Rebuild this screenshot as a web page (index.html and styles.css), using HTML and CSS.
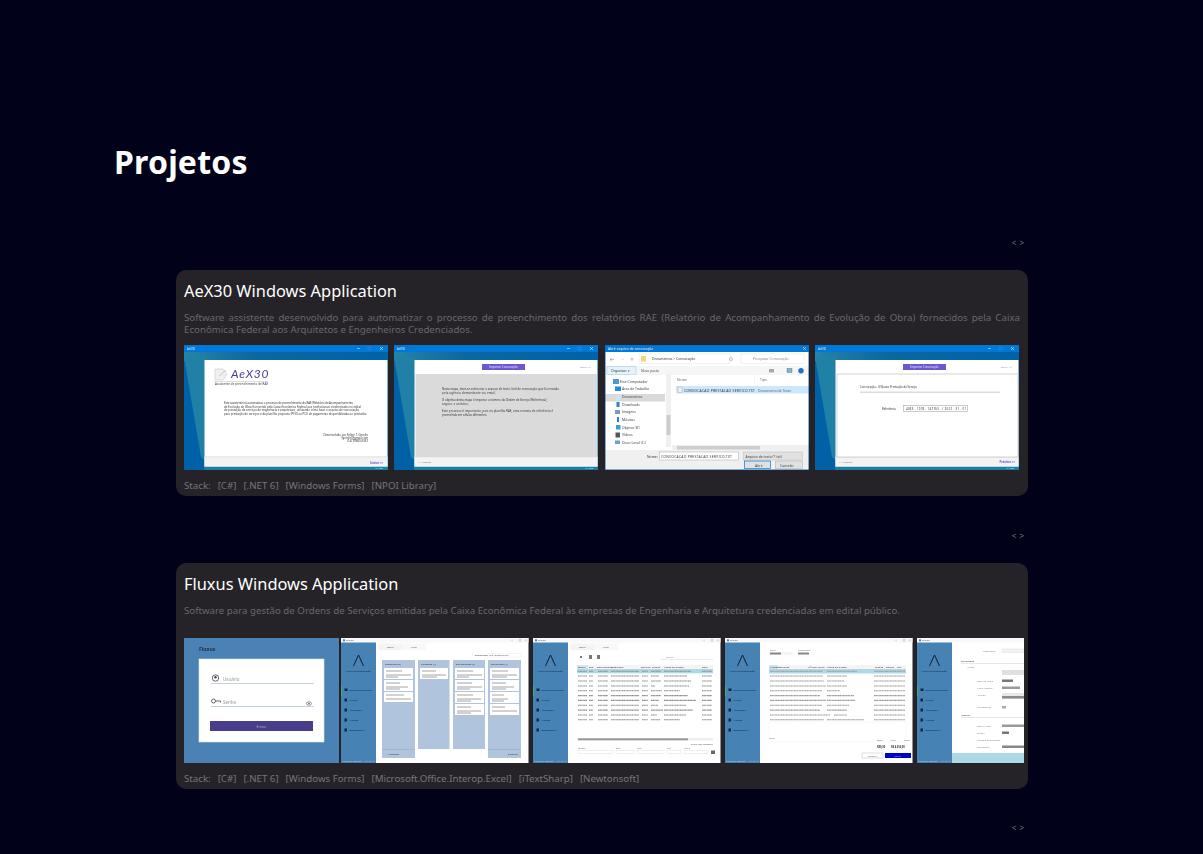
FILE: index.html
```html
<!DOCTYPE html>
<html lang="pt-BR">
<head>
  <meta charset="UTF-8" />
  <meta name="viewport" content="width=device-width, initial-scale=1.0"/>
  <title>Projetos</title>
  <link rel="stylesheet" href="styles.css">
</head>
<body>
  <main>
    <h1>Projetos</h1>

    <section class="project">
      <div class="carousel-nav"><span>&lt;</span><span>&gt;</span></div>
      <article class="card">
        <h2>AeX30 Windows Application</h2>
        <p class="desc">Software assistente desenvolvido para automatizar o processo de preenchimento dos relatórios RAE (Relatório de Acompanhamento de Evolução de Obra) fornecidos pela Caixa Econômica Federal aos Arquitetos e Engenheiros Credenciados.</p>
        <div class="gallery gallery-fit">
          <!-- tela inicial -->
          <svg class="shot" viewBox="0 0 204 125" width="204" height="125">
            <defs>
              <linearGradient id="wall" x1="0" y1="0" x2="1" y2="0">
                <stop offset="0" stop-color="#2584a8"/><stop offset="0.35" stop-color="#0b679f"/><stop offset="1" stop-color="#0062a8"/>
              </linearGradient>
              <g id="desktop">
                <rect width="204" height="125" fill="#0061a6"/>
                <rect y="7" width="204" height="9" fill="url(#wall)"/>
                <polygon points="0,12 22,12 22,116 17,112" fill="#2180a6"/>
                <rect y="121" x="20" width="184" height="4" fill="#1c7ea3"/>
                <rect width="204" height="7" fill="#0078d7"/>
                <text x="3" y="4.600" class="t3" fill="#d8ecfa">AeX30</text>
                <rect x="173" y="3" width="3" height="0.600" fill="#cfe6f8"/>
                <rect x="184" y="2" width="3" height="3" fill="none" stroke="#3a94de" stroke-width="0.500"/>
                <path d="M196 2l3 3m0-3l-3 3" stroke="#e8f4fc" stroke-width="0.600"/>
                <rect x="20.500" y="15" width="183" height="106.500" fill="#fff"/>
                <rect x="20.500" y="112" width="183" height="9.500" fill="#f3f3f3"/>
                <rect x="20.500" y="111.500" width="183" height="0.700" fill="#d6d6d6"/>
                <text x="199" y="124.400" text-anchor="end" class="t2" fill="#dff">v 1.0.0</text>
              </g>
              <g id="stepper">
                <rect x="88" y="19" width="43" height="6" fill="#6a5acd"/>
                <text x="109.500" y="23" text-anchor="middle" class="t3" fill="#e6e2fa">Importar Convocação</text>
                <text x="197" y="23" text-anchor="end" class="t2" fill="#999">Etapa 1/4</text>
              </g>
            </defs>
            <use href="#desktop"/>
            <path d="M31 24h8l4 5-4 6h-8z" fill="#f0f0f0" stroke="#cfcfcf" stroke-width="0.700"/>
            <path d="M35 31l7-6" stroke="#b5b5b5" stroke-width="0.700"/>
            <text x="47" y="33" class="logo-text" fill="#473d8f">AeX30</text>
            <rect x="30" y="36" width="54" height="0.500" fill="#bbb"/>
            <text x="31" y="40" class="t3 dark" textLength="53">Assistente de preenchimento de RAE</text>
            <g class="t3 dark">
              <text x="40" y="59.300" textLength="129">Este assistente irá automatizar o processo de preenchimento do RAE (Relatório de Acompanhamento</text>
              <text x="40" y="62.800" textLength="137">de Evolução de Obra) fornecido pela Caixa Econômica Federal aos profissionais credenciados no edital</text>
              <text x="40" y="66.300" textLength="135">de prestação de serviços de engenharia e arquitetura, utilizando como base o arquivo de convocação</text>
              <text x="40" y="70" textLength="143">para prestação de serviços e da planilha proposta (PFUI ou PCI) de pagamento disponibilizada ao prestador.</text>
              <text x="184" y="90.500" text-anchor="end">Desenvolvido por Felipe T. Gerolin</text>
              <text x="184" y="93.800" text-anchor="end">fgerolin@gmail.com</text>
              <text x="184" y="97" text-anchor="end">(14) 99809-9332</text>
            </g>
            <text x="199" y="119" text-anchor="end" class="t3 purple">Iniciar &gt;&gt;</text>
          </svg>

          <!-- importar convocacao -->
          <svg class="shot" viewBox="0 0 204 125" width="204" height="125">
            <use href="#desktop"/>
            <use href="#stepper"/>
            <rect x="21.500" y="29" width="181.500" height="83" fill="#dadada"/>
            <g class="t3 dark">
              <text x="48" y="45" textLength="117">Nesta etapa, deve-se selecionar o arquivo de texto (.txt) de convocação que foi enviado</text>
              <text x="48" y="48.500" textLength="54">pela agência demandante via email.</text>
              <text x="48" y="56" textLength="105">O objetivo desta etapa é importar o número da Ordem de Serviço (Referência),</text>
              <text x="48" y="59.500" textLength="27">seguro e unitário.</text>
              <text x="48" y="67" textLength="111">Este processo é importante, pois na planilha RAE, uma nomeia de referência é</text>
              <text x="48" y="70.500" textLength="45">preenchida em células diferentes.</text>
            </g>
            <text x="24" y="118" class="t2" fill="#777">&lt;&lt; Anterior</text>
          </svg>

          <!-- janela abrir arquivo -->
          <svg class="shot" viewBox="0 0 204 125" width="204" height="125">
            <rect width="204" height="125" fill="#fff"/>
            <rect width="204" height="7" fill="#0078d7"/>
            <text x="3" y="4.800" class="t4" fill="#dcefff">Abrir arquivo de convocação</text>
            <path d="M198 2l3 3m0-3l-3 3" stroke="#e8f4fc" stroke-width="0.500"/>
            <g stroke="#888" stroke-width="0.500" fill="none">
              <path d="M5 14.500h4m-2-1.500l-2 1.500 2 1.500"/>
              <path d="M16 14.500h3" stroke="#ccc"/>
              <path d="M27 16v-3m-1.500 1.500l1.500-1.500 1.500 1.500"/>
              <rect x="34" y="9" width="91" height="9.500" stroke="#e4e4e4"/>
              <rect x="136" y="9" width="63" height="9.500" stroke="#e4e4e4"/>
              <circle cx="126" cy="14" r="1.500"/>
            </g>
            <rect x="36" y="11" width="5" height="5.500" fill="#f7d675"/>
            <text x="47" y="15.400" class="t4 dark">Documentos  &gt;  Convocação</text>
            <text x="148" y="15.400" class="t4" fill="#8c8c8c">Pesquisar Convocação</text>
            <rect y="21" width="204" height="9" fill="#f5f6f7"/>
            <rect x="2" y="21.500" width="29" height="8" fill="#e5f1fb" stroke="#a6cdea" stroke-width="0.600"/>
            <text x="6" y="27" class="t4" fill="#444">Organizar ▾</text>
            <text x="36" y="27" class="t4" fill="#555">Nova pasta</text>
            <rect x="164" y="24" width="5" height="3.500" fill="#a9a9a9"/>
            <rect x="182" y="23.500" width="5" height="4" fill="#7fb6dd" stroke="#666" stroke-width="0.400"/>
            <circle cx="196" cy="25.700" r="2.700" fill="#1b74c5"/>
            <rect y="49" x="0" width="60" height="7.500" fill="#d9d9d9"/>
            <g class="t4" fill="#444">
              <text x="15" y="37.800">Este Computador</text>
              <text x="17" y="45.300">Área de Trabalho</text>
              <text x="17" y="53">Documentos</text>
              <text x="17" y="60.700">Downloads</text>
              <text x="17" y="68.300">Imagens</text>
              <text x="17" y="76">Músicas</text>
              <text x="17" y="83.700">Objetos 3D</text>
              <text x="17" y="91.300">Vídeos</text>
              <text x="17" y="99">Disco Local (C:)</text>
            </g>
            <g>
              <rect x="8" y="34" width="6" height="5" fill="#4b9ad8"/>
              <rect x="10" y="41.500" width="6" height="4.500" fill="#2b8ad6"/>
              <rect x="11" y="49.500" width="4.500" height="5.500" fill="#cfe3f2"/>
              <rect x="11.500" y="57" width="3" height="5" fill="#2d7fd0"/>
              <rect x="10" y="65" width="5" height="4" fill="#7d9bb5"/>
              <rect x="12" y="72" width="2" height="5" fill="#2d7fd0"/>
              <rect x="11" y="80" width="4.500" height="4.500" fill="#36a0d8"/>
              <rect x="10.500" y="87.500" width="4.500" height="5" fill="#555"/>
              <rect x="10" y="95.500" width="5" height="3.500" fill="#6aa3c8"/>
            </g>
            <rect x="61" y="29" width="5" height="73" fill="#f0f0f0"/>
            <rect x="61.500" y="70" width="4" height="20" fill="#cdcdcd"/>
            <text x="72" y="35.500" class="t4" fill="#666">Nome</text>
            <text x="155" y="35.500" class="t4" fill="#666">Tipo</text>
            <rect x="149" y="30" width="0.400" height="9" fill="#e5e5e5"/>
            <rect x="71" y="41" width="133" height="7.500" fill="#cce8ff"/>
            <rect x="73" y="42" width="4" height="5.500" fill="#f2f2f2" stroke="#999" stroke-width="0.400"/>
            <text x="79" y="46.700" class="t4 dark" textLength="71">CONVOCACAO PRESTACAO SERVICO.TXT</text>
            <text x="153" y="46.700" class="t4" fill="#666">Documento de Texto</text>
            <rect x="67" y="100" width="137" height="5" fill="#f0f0f0"/>
            <rect x="72" y="101" width="83" height="3.500" fill="#cdcdcd"/>
            <rect y="105" width="204" height="20" fill="#f0f0f0"/>
            <text x="42" y="113" class="t4 dark">Nome:</text>
            <rect x="54.500" y="107" width="79" height="8" fill="#fff" stroke="#a9a9a9" stroke-width="0.500"/>
            <text x="56" y="113" class="t4" fill="#444" textLength="71">CONVOCACAO PRESTACAO SERVICO.TXT</text>
            <rect x="138.500" y="107" width="59" height="8" fill="#e1e1e1" stroke="#bbb" stroke-width="0.500"/>
            <text x="140.500" y="113" class="t4" fill="#444">Arquivo de texto (*.txt)</text>
            <rect x="139.500" y="116" width="26" height="7.500" fill="#e1e1e1" stroke="#0078d7" stroke-width="0.700"/>
            <text x="150" y="122" class="t4" fill="#444">Abrir</text>
            <rect x="170.500" y="116" width="27" height="7.500" fill="#e1e1e1" stroke="#adadad" stroke-width="0.500"/>
            <text x="175" y="122" class="t4" fill="#444">Cancelar</text>
            <rect width="204" height="125" fill="none" stroke="#0f69b5" stroke-width="1"/>
          </svg>

          <!-- confirmar convocacao -->
          <svg class="shot" viewBox="0 0 204 125" width="204" height="125">
            <use href="#desktop"/>
            <use href="#stepper"/>
            <rect x="22" y="29" width="181" height="83" fill="#fff" stroke="#c8c8c8" stroke-width="0.800"/>
            <text x="45" y="43" class="t3 dark" textLength="57">Convocação - 0/Quota Prestação de Serviço</text>
            <rect x="45" y="46.500" width="140" height="1.500" fill="#dcdcdc"/>
            <text x="67" y="65" class="t3 dark">Referência</text>
            <rect x="88.500" y="60.500" width="64" height="6" fill="#fff" stroke="#b5b5b5" stroke-width="0.700"/>
            <text x="91" y="65" class="t3 dark" textLength="60">4063 . 1078 . 147763 . / 2022 . 31 . 01</text>
            <text x="24" y="118" class="t2" fill="#777">&lt;&lt; Anterior</text>
            <text x="200" y="118" text-anchor="end" class="t3 purple">Próximo &gt;&gt;</text>
          </svg>
        </div>
        <p class="stack"><span>Stack:</span><span>[C#]</span><span>[.NET 6]</span><span>[Windows Forms]</span><span>[NPOI Library]</span></p>
      </article>
    </section>

    <section class="project">
      <div class="carousel-nav"><span>&lt;</span><span>&gt;</span></div>
      <article class="card">
        <h2>Fluxus Windows Application</h2>
        <p class="desc desc-short">Software para gestão de Ordens de Serviços emitidas pela Caixa Econômica Federal às empresas de Engenharia e Arquitetura credenciadas em edital público.</p>
        <div class="gallery gallery-scroll">
          <!-- login -->
          <svg class="shot shot-login" viewBox="0 0 155 125" width="155" height="125">
            <defs>
              <g id="fxBase">
                <rect width="187.500" height="125" fill="#fff"/>
                <rect width="187.500" height="4.500" fill="#f8f8f8"/>
                <rect x="2" y="1.300" width="2" height="2" fill="#4682b4"/>
                <text x="5" y="3.300" class="t2" fill="#444">Fluxus</text>
                <path d="M170 2.200h2M178 1.300h2v2h-2zM184 1.300l2 2m0-2l-2 2" stroke="#888" stroke-width="0.300" fill="none"/>
                <rect y="4.500" width="35" height="120.500" fill="#4682b4"/>
                <path d="M17.500 17l-5 11m5-11l5 11" stroke="#0b2239" stroke-width="1" fill="none"/>
                <path d="M17.500 23l-2.500 5h5z" fill="#5f7f9e"/>
                <text x="17.500" y="33.500" text-anchor="middle" class="t2" fill="#12263a">fluxus administração</text>
                <rect y="48" width="1" height="10" fill="#3cb371"/>
                <g fill="#10263c">
                  <rect x="3.500" y="50.500" width="3" height="2.500"/>
                  <rect x="3.500" y="60.500" width="2.500" height="3"/>
                  <rect x="3.500" y="70.500" width="2.500" height="3"/>
                  <rect x="3.500" y="80.500" width="2.500" height="3"/>
                  <rect x="3.500" y="90.500" width="2.500" height="3"/>
                </g>
                <g class="t2" fill="#10263c">
                  <text x="8.500" y="53">Ordens de Serviços</text>
                  <text x="8.500" y="63">Prazos</text>
                  <text x="8.500" y="73">Atividades</text>
                  <text x="8.500" y="83">Ajustes</text>
                  <text x="8.500" y="93">Conferência</text>
                </g>
                <text x="1.500" y="123.500" class="t2" fill="#bcd">Usuário: leandro</text>
                <text x="33" y="123.500" text-anchor="end" class="t2" fill="#bcd">v 1.0.16</text>
              </g>
              <g id="fxTabs">
                <rect x="37" y="5.500" width="24" height="6.500" fill="#f4f4f4"/>
                <rect x="61" y="5.500" width="24" height="6.500" fill="#f8f8f8"/>
                <text x="49" y="10" text-anchor="middle" class="t2" fill="#555">Mapa</text>
                <text x="73" y="10" text-anchor="middle" class="t2" fill="#555">Lista</text>
              </g>
            </defs>
            <rect width="155" height="125" fill="#4a82b5"/>
            <text x="15" y="13" class="login-brand">Fluxus</text>
            <rect x="15" y="21" width="125" height="83" fill="#fff" stroke="#dbe6f0" stroke-width="0.600"/>
            <circle cx="31.500" cy="40" r="3.200" fill="none" stroke="#444" stroke-width="0.800"/>
            <circle cx="31.500" cy="39.300" r="1.200" fill="#444"/>
            <text x="39" y="42.500" class="t5" fill="#999">Usuário</text>
            <rect x="27" y="45" width="103" height="0.700" fill="#a7bfdc"/>
            <circle cx="29.500" cy="63" r="2" fill="none" stroke="#444" stroke-width="0.800"/>
            <path d="M31.500 63h5v1.500" stroke="#444" stroke-width="0.800" fill="none"/>
            <text x="39" y="65.500" class="t5" fill="#999">Senha</text>
            <ellipse cx="125" cy="65.500" rx="2.600" ry="1.700" fill="none" stroke="#555" stroke-width="0.600"/>
            <circle cx="125" cy="65.500" r="0.800" fill="#555"/>
            <rect x="27" y="68" width="103" height="0.700" fill="#a7bfdc"/>
            <rect x="26" y="83" width="103" height="10" fill="#483d8b"/>
            <text x="77.500" y="89.500" text-anchor="middle" class="t4" fill="#a8a3c9">Entrar</text>
          </svg>

          <!-- quadro de ordens -->
          <svg class="shot" viewBox="0 0 187.500 125" width="187.500" height="125">
            <use href="#fxBase"/>
            <use href="#fxTabs"/>
            <text x="134" y="18" class="t2 dark">Encarregado:</text>
            <rect x="147" y="15.500" width="33" height="3.500" fill="#fff" stroke="#ddd" stroke-width="0.300"/>
            <text x="148" y="18" class="t2" fill="#666">Leo Montenegro</text>
            <g fill="#b0c4de">
              <rect x="41" y="22" width="33" height="98"/>
              <rect x="77" y="22" width="31.500" height="89"/>
              <rect x="112" y="22" width="32" height="89"/>
              <rect x="147" y="22" width="33" height="98"/>
            </g>
            <g class="t2 dark">
              <text x="44" y="27">Recebidas (3)</text>
              <text x="80" y="27">Pendente (1)</text>
              <text x="115" y="27">Em Execução (4)</text>
              <text x="150" y="27">Concluídas (4)</text>
            </g>
            <g fill="#fff">
              <rect x="43" y="30" width="29" height="11"/><rect x="43" y="42" width="29" height="11"/><rect x="43" y="54" width="29" height="10"/>
              <rect x="79" y="30" width="28" height="11"/>
              <rect x="114" y="30" width="29" height="11"/><rect x="114" y="42" width="29" height="11"/><rect x="114" y="54" width="29" height="11"/><rect x="114" y="66" width="29" height="11"/>
              <rect x="149" y="30" width="29" height="11"/><rect x="149" y="42" width="29" height="11"/><rect x="149" y="54" width="29" height="11"/><rect x="149" y="66" width="29" height="11"/>
            </g>
            <g class="speck" stroke="#8d8d8d" stroke-width="0.800">
              <path d="M45 33h16M45 37h25M45 39h12M45 45h14M45 49h22M45 51h14M45 57h18M45 61h25"/>
              <path d="M81 33h14M81 37h24M81 39h15"/>
              <path d="M116 33h16M116 37h25M116 39h12M116 45h15M116 49h25M116 51h13M116 57h16M116 61h24M116 63h14M116 69h14M116 73h24M116 75h14"/>
              <path d="M151 33h16M151 37h25M151 39h15M151 45h14M151 49h22M151 51h14M151 57h12M151 61h16M151 63h12M151 69h13M151 73h25"/>
            </g>
            <rect x="41" y="111" width="33" height="0.500" fill="#93a9c6"/>
            <rect x="147" y="111" width="33" height="0.500" fill="#93a9c6"/>
            <text x="45" y="116.500" class="t2 dark">+ Adicionar</text>
            <text x="177" y="116.500" text-anchor="end" class="t2 dark">Exportar</text>
          </svg>

          <!-- lista de ordens -->
          <svg class="shot" viewBox="0 0 187.500 125" width="187.500" height="125">
            <use href="#fxBase"/>
            <use href="#fxTabs"/>
            <g fill="#777"><rect x="47" y="18" width="2" height="2"/><rect x="56" y="17" width="3" height="4"/><rect x="64" y="17" width="3" height="4"/></g>
            <text x="133" y="20" class="t2" fill="#999">Buscar</text>
            <rect x="127" y="21.500" width="53" height="0.400" fill="#ccc"/>
            <rect x="44" y="27" width="136" height="4" fill="#f4f4f4"/>
            <rect x="44" y="27" width="11" height="4" fill="#d6e6f2"/>
            <g class="t2 dark">
              <text x="45" y="30">Status</text><text x="56" y="30">Seq</text><text x="64" y="30">Data Entrega</text><text x="78" y="30">Referência</text><text x="108" y="30">Cód Exp</text><text x="119" y="30">Cidade</text><text x="131" y="30">Nome do Cliente</text><text x="169" y="30">Data</text>
            </g>
            <rect x="44" y="31" width="136" height="4.300" fill="#add8e6"/>
            <g class="speck" stroke="#8a8a8a" stroke-width="1.100" stroke-dasharray="1 .3 1.600 .3 1.200 .4">
              <path d="M45 33.200h9M56 33.200h4M65 33.200h10M78 33.200h28M109 33.200h6M118 33.200h10M131 33.200h27M169 33.200h10"/>
              <path d="M45 38h9M56 38h4M65 38h10M78 38h28M109 38h6M118 38h8M131 38h23M169 38h10"/>
              <path d="M45 43h9M56 43h4M65 43h10M78 43h28M109 43h6M118 43h10M131 43h27M169 43h10"/>
              <path d="M45 48h9M56 48h4M65 48h10M78 48h28M109 48h6M118 48h4M131 48h25M169 48h10"/>
              <path d="M45 52.800h9M56 52.800h4M65 52.800h10M78 52.800h28M109 52.800h6M118 52.800h11M131 52.800h16M169 52.800h10"/>
              <path d="M45 57.600h9M56 57.600h4M65 57.600h10M78 57.600h28M109 57.600h6M118 57.600h10M131 57.600h24M169 57.600h10"/>
              <path d="M45 62.400h9M56 62.400h4M65 62.400h10M78 62.400h28M109 62.400h6M118 62.400h8M131 62.400h32M169 62.400h10"/>
              <path d="M45 67.300h9M56 67.300h4M65 67.300h10M78 67.300h28M109 67.300h6M118 67.300h7M131 67.300h22M169 67.300h10"/>
              <path d="M45 72.100h9M56 72.100h4M65 72.100h10M78 72.100h28M109 72.100h6M118 72.100h12M131 72.100h29M169 72.100h10"/>
              <path d="M45 77h9M56 77h4M65 77h10M78 77h28M109 77h6M118 77h6M131 77h22M169 77h10"/>
              <path d="M45 81.800h9M56 81.800h4M65 81.800h10M78 81.800h28M109 81.800h6M118 81.800h9M131 81.800h16M169 81.800h10"/>
            </g>
            <rect x="44" y="100" width="136" height="2.500" fill="#eee"/>
            <rect x="45" y="100.300" width="110" height="2" fill="#999"/>
            <text x="158" y="106.500" class="t2" fill="#555">Exibir por Registro</text>
            <g class="t2" fill="#777"><text x="45" y="111">Status</text><text x="83" y="111">Seq</text><text x="104" y="111">Cód</text><text x="134" y="111">Ref</text><text x="151" y="111">Filtro</text></g>
            <g fill="#fff" stroke="#ccc" stroke-width="0.300">
              <rect x="45" y="112.500" width="35" height="3"/><rect x="83" y="112.500" width="18" height="3"/><rect x="104" y="112.500" width="27" height="3"/><rect x="134" y="112.500" width="14" height="3"/><rect x="151" y="112.500" width="24" height="3"/>
            </g>
            <rect x="178" y="112.500" width="4" height="3.500" fill="#666"/>
          </svg>

          <!-- detalhe da ordem -->
          <svg class="shot" viewBox="0 0 187.500 125" width="187.500" height="125">
            <use href="#fxBase"/>
            <text x="45" y="13" class="t2" fill="#777">Data</text>
            <text x="73" y="13" class="t2" fill="#777">Referência</text>
            <rect x="45" y="14" width="23" height="3" fill="#f4f4f4"/>
            <rect x="45" y="14.500" width="11" height="2" fill="#888"/>
            <rect x="73" y="14.500" width="11" height="2" fill="#888"/>
            <rect x="44" y="27" width="137" height="4" fill="#f4f4f4"/>
            <rect x="44" y="27" width="9" height="4" fill="#cfe2f0"/>
            <g class="t2 dark"><text x="45" y="30">Número</text><text x="54" y="30">Contrato</text><text x="83" y="30">Nº Proc. Caixa</text><text x="102" y="30">Nome do Cliente</text><text x="150" y="30">Cidade</text><text x="161" y="30">Estado</text><text x="172" y="30">CEP</text></g>
            <rect x="44" y="31" width="137" height="4.500" fill="#add8e6"/>
            <g class="speck" stroke="#999" stroke-width="1.100" stroke-dasharray="1 .3 1.600 .3 1.200 .4">
              <path d="M45 33.200h53M102 33.200h30M149 33.200h31"/>
              <path d="M45 38h53M102 38h20M149 38h31"/>
              <path d="M45 43h54M102 43h17M149 43h31"/>
              <path d="M45 48h56M102 48h20M149 48h31"/>
              <path d="M45 52.800h52M102 52.800h13M149 52.800h31"/>
              <path d="M45 57.600h50M102 57.600h27M149 57.600h31"/>
              <path d="M45 62.400h56M102 62.400h28M149 62.400h31"/>
              <path d="M45 67.300h52M102 67.300h22M149 67.300h31"/>
              <path d="M45 72.100h50M102 72.100h20M149 72.100h31"/>
              <path d="M45 77h60M109 77h13M149 77h31"/>
              <path d="M45 81.800h54M102 81.800h37M149 81.800h31"/>
            </g>
            <rect x="44" y="84" width="137" height="20" fill="none" stroke="#eee" stroke-width="0.400"/>
            <text x="44" y="101" class="t2" fill="#777">Total</text>
            <g class="t2" fill="#777"><text x="152" y="103">Qtde</text><text x="165" y="103">Valor</text><text x="179" y="103">Total</text></g>
            <text x="152" y="110" class="t2 dark" font-weight="700">R$0,00</text>
            <text x="166" y="110" class="t2 dark" font-weight="700">R$ 4.356,00</text>
            <rect x="137" y="115" width="21" height="5" fill="#fff" stroke="#bbb" stroke-width="0.500"/>
            <text x="147.500" y="118.500" text-anchor="middle" class="t2" fill="#777">Cancelar</text>
            <rect x="160" y="115" width="26" height="5" fill="#0000cd"/>
            <text x="173" y="118.500" text-anchor="middle" class="t2" fill="#99f">Salvar</text>
          </svg>

          <!-- cadastro -->
          <svg class="shot" viewBox="0 0 187.500 125" width="187.500" height="125">
            <use href="#fxBase"/>
            <rect x="35" y="115" width="152.500" height="10" fill="#add8e6"/>
            <g class="t2" fill="#888">
              <text x="66" y="14">Referência</text><text x="50" y="30">Ajuste</text><text x="60" y="44">Data de Início</text><text x="60" y="51">Nova Vistoria</text><text x="60" y="58">Anexos</text><text x="60" y="70">Conferência</text><text x="60" y="89">Data e Valor</text><text x="60" y="96">Status</text><text x="60" y="103">Nome e Sobrenome</text><text x="60" y="110">Conclusão</text>
            </g>
            <g class="t2 dark"><text x="44" y="24">Contratada</text><text x="44" y="78">Vistoria</text></g>
            <rect x="44" y="25" width="70" height="0.800" fill="#e2e2e2"/>
            <rect x="44" y="79" width="70" height="0.800" fill="#e2e2e2"/>
            <rect x="85" y="11" width="22" height="3.500" fill="#f2f2f2" stroke="#ccc" stroke-width="0.300"/>
            <rect x="85" y="32" width="22" height="5" fill="#e0e0e0"/>
            <rect x="85" y="41.500" width="11" height="2.500" fill="#777"/>
            <rect x="85" y="48.500" width="18" height="2.500" fill="#999"/>
            <rect x="85" y="55" width="22" height="6" fill="#e8e8e8"/>
            <rect x="85" y="58" width="22" height="2.500" fill="#8a8a8a"/>
            <rect x="85" y="68" width="4" height="2.500" fill="#aaa"/>
            <rect x="85" y="86.500" width="22" height="2.500" fill="#999"/>
            <rect x="85" y="93.500" width="7" height="2.500" fill="#777"/>
            <rect x="85" y="107.500" width="22" height="2.500" fill="#888"/>
          </svg>
        </div>
        <p class="stack"><span>Stack:</span><span>[C#]</span><span>[.NET 6]</span><span>[Windows Forms]</span><span>[Microsoft.Office.Interop.Excel]</span><span>[iTextSharp]</span><span>[Newtonsoft]</span></p>
      </article>
    </section>

    <div class="carousel-nav carousel-nav-last"><span>&lt;</span><span>&gt;</span></div>
  </main>
</body>
</html>
```

FILE: styles.css
```css
body {
  margin: 0;
  background: #01011a;
  color: #fff;
  font-family: "Noto Sans", sans-serif;
  overflow: hidden;
}

main {
  padding: 143px 175px 0 176px;
}

h1 {
  margin: 0 0 56px -62px;
  font-size: 32px;
  line-height: 38px;
  font-weight: 700;
  letter-spacing: 0.2px;
}

.carousel-nav {
  display: flex;
  justify-content: flex-end;
  gap: 3px;
  height: 12px;
  padding-right: 4px;
  color: #77757a;
  font-size: 8px;
  line-height: 12px;
}

.project {
  margin-bottom: 33.500px;
}

.project .carousel-nav {
  margin-bottom: 21px;
}

.card {
  box-sizing: border-box;
  height: 226px;
  padding: 8px 8px 0;
  background: #252328;
  border-radius: 10px;
}

.card h2 {
  margin: 0;
  font-size: 16.400px;
  line-height: 26px;
  font-weight: 400;
}

.desc {
  margin: 8px 0 0;
  height: 33px;
  color: #69676c;
  font-size: 9.700px;
  line-height: 12px;
  text-align: justify;
}

.gallery {
  display: flex;
  height: 125px;
}

.gallery-fit {
  justify-content: space-between;
  width: 835px;
}

.gallery-scroll {
  gap: 4.500px;
  overflow: hidden;
  width: 840px;
}

.shot {
  display: block;
  flex: none;
  filter: blur(0.3px);
}

.shot-login {
  margin-right: -2.500px;
}

.stack {
  display: flex;
  gap: 7px;
  margin: 9px 0 0;
  color: #77757a;
  font-size: 9.700px;
  line-height: 14px;
}

/* tiny labels inside the screenshots */
.shot text {
  font-family: "Noto Sans", sans-serif;
}

.t2 {
  font-size: 2.500px;
}

.t3 {
  font-size: 2.800px;
}

.t4 {
  font-size: 3.400px;
}

.t5 {
  font-size: 4.500px;
}

.dark {
  fill: #333;
}

.purple {
  fill: #6a5acd;
  font-weight: 700;
}

.shot .logo-text {
  font-family: "Lato", sans-serif;
  font-size: 12px;
  font-style: italic;
  letter-spacing: 0.8px;
}

.login-brand {
  fill: #1d2f44;
  font-size: 5px;
  font-weight: 700;
}

.speck {
  fill: none;
}
```
